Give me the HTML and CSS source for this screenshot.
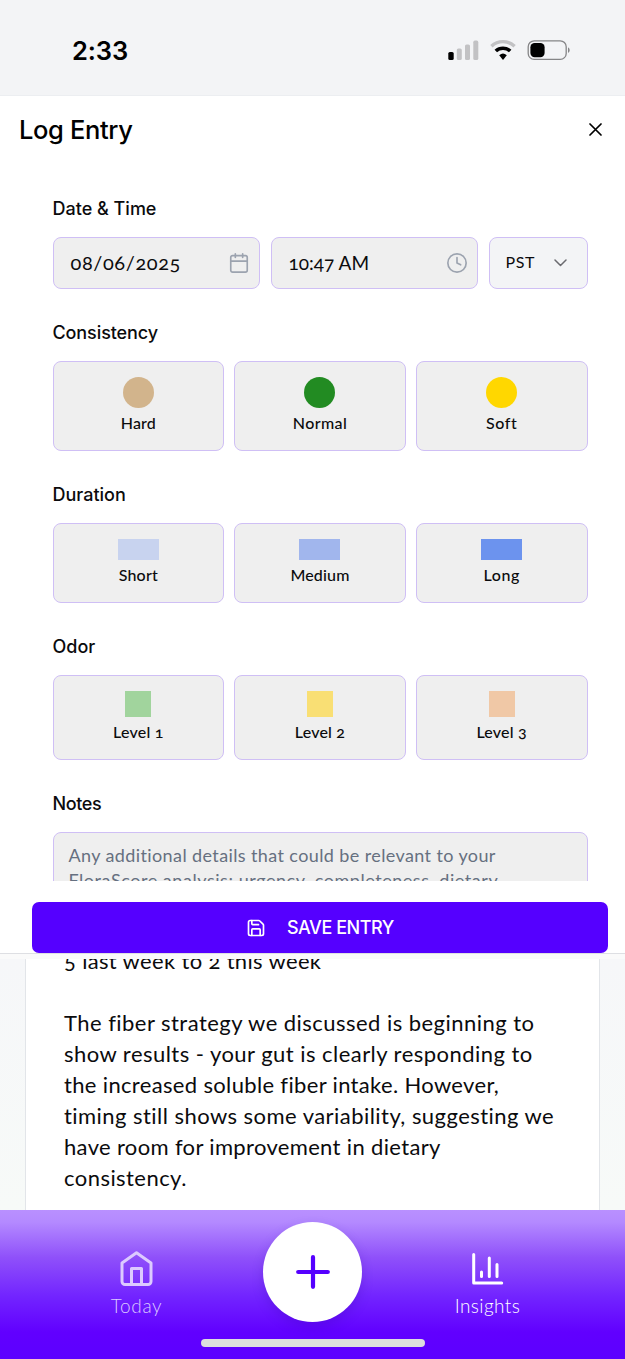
FILE: index.html
```
<!DOCTYPE html>
<html lang="en">
<head>
<meta charset="utf-8">
<title>Log Entry</title>
<link rel="stylesheet" href="styles.css">
</head>
<body>
<div class="phone">
  <header class="status">
    <span class="clock">2:33</span>
    <svg class="status-icons" width="124" height="24" viewBox="0 0 124 24">
      <rect x="0.3" y="13" width="5.4" height="8" rx="1.6" fill="#000"/>
      <g fill="#c2c2c4"><rect x="8.8" y="9.5" width="5" height="11.5" rx="1.6"/><rect x="17" y="5.5" width="5" height="15.500" rx="1.6"/><rect x="25.3" y="1.6" width="5" height="19.4" rx="1.6"/></g>
      <path d="M43.4 7.2a17 17 0 0 1 23.200 0" fill="none" stroke="#c2c2c4" stroke-width="3.4"/>
      <path d="M47.8 12a10.6 10.6 0 0 1 14.4 0" fill="none" stroke="#000" stroke-width="3.6"/>
      <path d="M51.2 16.2a5.8 5.8 0 0 1 7.6 0L55 20.9z" fill="#000"/>
      <rect x="80.2" y="1.8" width="38" height="18.6" rx="6" fill="none" stroke="#858587" stroke-width="1.3"/>
      <rect x="82.4" y="4" width="14.2" height="14.2" rx="4.2" fill="#000"/>
      <path d="M120 8.2a3.3 3.3 0 0 1 0 5.8z" fill="#858587"/>
    </svg>
  </header>

  <main class="sheet">
    <div class="sheet-head">
      <h1>Log Entry</h1>
      <svg class="close" width="13" height="13" viewBox="0 0 13 13"><path d="M1 1l11 11M12 1L1 12"/></svg>
    </div>

    <div class="form">
      <section class="group">
        <h2>Date &amp; Time</h2>
        <div class="when">
          <div class="field date"><span>08/06/2025</span>
            <svg class="icon" width="22" height="22" viewBox="0 0 24 24"><rect x="3" y="4" width="18" height="18" rx="2"/><path d="M8 2v4M16 2v4M3 10h18"/></svg>
          </div>
          <div class="field time"><span>10:47 AM</span>
            <svg class="icon" width="22" height="22" viewBox="0 0 24 24"><circle cx="12" cy="12" r="10"/><path d="M12 6v6l4 2"/></svg>
          </div>
          <div class="field zone"><span>PST</span>
            <svg class="chevron" width="13" height="8" viewBox="0 0 13 8"><path d="M1 1l5.5 5.5L12 1"/></svg>
          </div>
        </div>
      </section>

      <section class="group">
        <h2 class="t-cons">Consistency</h2>
        <div class="options tall">
          <div class="option"><i class="dot tan"></i><span class="w-hard">Hard</span></div>
          <div class="option"><i class="dot green"></i><span class="w-normal">Normal</span></div>
          <div class="option"><i class="dot gold"></i><span class="w-soft">Soft</span></div>
        </div>
      </section>

      <section class="group">
        <h2>Duration</h2>
        <div class="options low">
          <div class="option"><i class="bar short"></i><span>Short</span></div>
          <div class="option"><i class="bar medium"></i><span>Medium</span></div>
          <div class="option"><i class="bar long"></i><span class="w-soft">Long</span></div>
        </div>
      </section>

      <section class="group">
        <h2>Odor</h2>
        <div class="options mid">
          <div class="option"><i class="square mint"></i><span class="w-level">Level 1</span></div>
          <div class="option"><i class="square yellow"></i><span class="w-level">Level 2</span></div>
          <div class="option"><i class="square peach"></i><span class="w-level">Level 3</span></div>
        </div>
      </section>

      <section class="group">
        <h2 class="t-notes">Notes</h2>
        <div class="notes"><div class="n1">Any additional details that could be relevant to your</div><div class="n2">FloraScore analysis: urgency, completeness, dietary</div></div>
      </section>
    </div>

    <div class="save">
      <svg width="20" height="20" viewBox="0 0 24 24"><path d="M15.2 3a2 2 0 0 1 1.4.6l3.8 3.8a2 2 0 0 1 .6 1.4V19a2 2 0 0 1-2 2H5a2 2 0 0 1-2-2V5a2 2 0 0 1 2-2z"/><path d="M17 21v-7a1 1 0 0 0-1-1H8a1 1 0 0 0-1 1v7M7 3v4a1 1 0 0 0 1 1h7"/></svg>
      <span>SAVE ENTRY</span>
    </div>
  </main>
  <div class="sheet-edge"></div>

  <div class="page">
    <article class="card">
      <p class="previous"><span class="p0">5 last week to 2 this week</span></p>
      <p>
        <span class="p1">The fiber strategy we discussed is beginning to</span>
        <span class="p1">show results - your gut is clearly responding to</span>
        <span class="p0">the increased soluble fiber intake. However,</span>
        <span class="p2">timing still shows some variability, suggesting we</span>
        <span class="p0">have room for improvement in dietary</span>
        <span class="p2">consistency.</span>
      </p>
    </article>
  </div>

  <nav class="tabs">
    <div class="tab today">
      <svg width="33" height="35" viewBox="0 0 33 35"><path d="M16.5 1.8L31 12v18.5a3 3 0 0 1-3 3H5a3 3 0 0 1-3-3V12z"/><path d="M11.5 33.5V17.500h10v16"/></svg>
      <span>Today</span>
    </div>
    <div class="add"><svg width="34" height="34" viewBox="0 0 34 34"><path d="M17 2.2v29.6M2.2 17h29.6"/></svg></div>
    <div class="tab insights">
      <svg width="33" height="35" viewBox="0 0 33 35"><path d="M2.7 3.4v28.6h28M10.500 21v4.500M18.300 7v18.500M26 13.500v12"/></svg>
      <span>Insights</span>
    </div>
    <div class="home-bar"></div>
  </nav>
</div>
</body>
</html>
```
FILE: styles.css
```
* { box-sizing: border-box; }
body { margin: 0; font-family: Lato, "Open Sans", sans-serif; color: #0b0b0d; }
h1, h2, p { margin: 0; }
svg { display: block; flex: none; }

.phone { width: 625px; height: 1359px; display: flex; flex-direction: column; overflow: hidden; background: #fff; }

.status { height: 96px; flex: none; display: flex; justify-content: space-between; align-items: center; padding: 6px 53px 0 72px; background: #f3f4f6; border-bottom: 1px solid #eceef1; }
.clock { font: 600 25.5px/30px Inter, sans-serif; letter-spacing: -0.1px; color: #000; }

.sheet { height: 857px; flex: none; display: flex; flex-direction: column; background: #fff; }
.sheet-head { height: 67px; flex: none; display: flex; justify-content: space-between; align-items: center; padding: 0 23px 0 19px; }
h1 { font: 500 25.5px/32px Inter, sans-serif; letter-spacing: -0.35px; color: #000; }
.close { fill: none; stroke: #000; stroke-width: 1.7; stroke-linecap: round; }

.form { height: 718px; flex: none; overflow: hidden; padding: 34px 37px 0 52.5px; }
.group { margin-bottom: 31px; width: 535px; }
h2 { margin-bottom: 16px; font: 500 18px/24px Inter, sans-serif; color: #0b0b0d; }
.group { padding-bottom: 1px; }
.t-cons { letter-spacing: -0.1px; }
.t-notes { letter-spacing: -0.4px; }

.when { display: grid; grid-template-columns: 207.5px 207.5px 99px; gap: 10.500px; height: 52px; }
.field, .option, .notes { border: 1.5px solid #cfbff5; border-radius: 8px; background: #efefef; }
.field { display: flex; justify-content: space-between; align-items: center; font-size: 20px; font-variant-numeric: oldstyle-nums; padding: 0 9px 0 17px; }
.field span { padding-bottom: 2px; white-space: nowrap; }
.date span { letter-spacing: .6px; }
.time { font-size: 19px; }
.zone { background: #f3f4f6; font-size: 16px; padding: 0 19.500px 0 16px; }
.zone span { letter-spacing: .55px; padding-bottom: 3px; }
.icon { fill: none; stroke: #9ca3af; stroke-width: 1.8; stroke-linecap: round; stroke-linejoin: round; }
.chevron { fill: none; stroke: #6b6b70; stroke-width: 1.5; stroke-linecap: round; stroke-linejoin: round; }

.options { display: grid; grid-template-columns: repeat(3, 1fr); gap: 10px; }
.tall { height: 90px; }
.low { height: 80px; }
.mid { height: 85px; }
.option { display: flex; flex-direction: column; align-items: center; padding-top: 15px; font-size: 16px; font-weight: 500; line-height: 20px; letter-spacing: .16px; font-variant-numeric: oldstyle-nums; }
.option i { display: block; margin-bottom: 5px; }
.w-hard { letter-spacing: .14px; }
.w-normal { letter-spacing: .4px; }
.w-soft { letter-spacing: .55px; }
.w-level { letter-spacing: .2px; }
.dot { width: 31px; height: 31px; border-radius: 50%; }
.tan { background: #d2b48c; }
.green { background: #228b22; }
.gold { background: #ffd700; }
.bar { width: 41px; height: 21px; }
.short { background: #c8d3ef; }
.medium { background: #a1b6ed; }
.long { background: #6c93ee; }
.square { width: 26px; height: 26px; }
.mint { background: #a1d49d; }
.yellow { background: #f9df74; }
.peach { background: #f0c8a6; }

.notes { height: 90px; padding: 10px 15px; font-size: 18px; line-height: 25px; color: #667080; white-space: nowrap; }
.n1 { letter-spacing: .39px; }
.n2 { letter-spacing: .55px; }

.save { height: 51px; flex: none; margin: 21px 17px 0 32px; display: flex; align-items: center; gap: 21px; padding-left: 214px; border-radius: 7px; background: #5500ff; color: #fff; font: 500 18px/24px Inter, sans-serif; letter-spacing: -0.45px; }
.save svg { fill: none; stroke: #fff; stroke-width: 2; stroke-linecap: round; stroke-linejoin: round; }

.sheet-edge { height: 6px; flex: none; border-top: 1.5px solid #dedfe3; background: #fafafa; }

.page { height: 251px; flex: none; overflow: hidden; padding: 0 25px; background: linear-gradient(#f6f7f9, #f7faf8); }
.card { height: 251px; overflow: hidden; padding: 0 38px; background: #fff; border: solid #e2e5e9; border-width: 0 1.5px; font-size: 22px; line-height: 31px; font-variant-numeric: oldstyle-nums; }
.card p span { display: block; white-space: nowrap; }
.previous { margin: -14px 0 31px; }
.p0 { letter-spacing: .34px; }
.p1 { letter-spacing: .46px; }
.p2 { letter-spacing: .45px; }

.tabs { height: 149px; flex: none; display: grid; grid-template-columns: 263px 99px 263px; grid-template-rows: 112px 37px; background: linear-gradient(#b990ff 0, #b48aff 8%, #8f50fa 32%, #7224ff 58%, #6100ff 82%, #5c00ff 100%); }
.tab { display: flex; flex-direction: column; align-items: center; gap: 8px; padding-top: 41px; color: #fff; font-size: 19px; font-weight: 300; line-height: 24px; }
.tab svg { fill: none; stroke: currentColor; stroke-width: 3; stroke-linecap: round; stroke-linejoin: round; }
.today { color: #dccaff; padding-left: 10px; letter-spacing: .68px; }
.insights { padding-right: 12px; letter-spacing: .4px; }
.add { width: 99px; height: 100px; margin-top: 12px; display: grid; place-items: center; border-radius: 50%; background: #fff; box-shadow: 0 5px 12px rgba(50, 0, 160, .22); }
.add svg { fill: none; stroke: #5500ff; stroke-width: 4.2; stroke-linecap: round; }
.home-bar { grid-column: 1 / -1; justify-self: center; width: 224px; height: 8px; margin-top: 17px; border-radius: 4px; background: #dedede; }
```
